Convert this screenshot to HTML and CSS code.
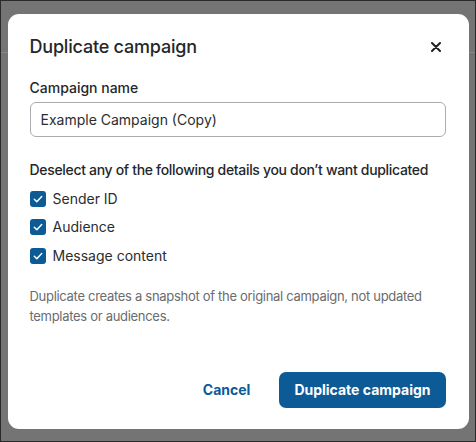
FILE: index.html
```html
<!DOCTYPE html>
<html lang="en">
<head>
<meta charset="utf-8">
<title>Duplicate campaign</title>
<link rel="stylesheet" href="styles.css">
</head>
<body>
<div class="page">
  <div class="page-header"></div>
  <div class="overlay">
    <div class="modal" role="dialog" aria-labelledby="dlg-title">
      <div class="modal-header">
        <h2 id="dlg-title" class="modal-title">Duplicate campaign</h2>
        <button class="close-btn" aria-label="Close">
          <svg width="10" height="10" viewBox="0 0 10 10"><path d="M1 1L9 9M9 1L1 9" stroke="#1f2326" stroke-width="2" stroke-linecap="round"/></svg>
        </button>
      </div>
      <div class="field">
        <label class="field-label" for="cname">Campaign name</label>
        <input id="cname" class="text-input" type="text" value="Example Campaign (Copy)">
      </div>
      <div class="options">
        <p class="options-title">Deselect any of the following details you don’t want duplicated</p>
        <label class="check-row">
          <span class="checkbox"><svg width="16" height="16" viewBox="0 0 16 16"><rect x="0" y="0" width="16" height="16" rx="3" fill="#0c5a96"/><path d="M4.3 8.3L6.8 10.7L11.7 5.6" fill="none" stroke="#fff" stroke-width="1.5" stroke-linecap="round" stroke-linejoin="round"/></svg></span>
          <span class="check-label">Sender ID</span>
        </label>
        <label class="check-row">
          <span class="checkbox"><svg width="16" height="16" viewBox="0 0 16 16"><rect x="0" y="0" width="16" height="16" rx="3" fill="#0c5a96"/><path d="M4.3 8.3L6.8 10.7L11.7 5.6" fill="none" stroke="#fff" stroke-width="1.5" stroke-linecap="round" stroke-linejoin="round"/></svg></span>
          <span class="check-label">Audience</span>
        </label>
        <label class="check-row">
          <span class="checkbox"><svg width="16" height="16" viewBox="0 0 16 16"><rect x="0" y="0" width="16" height="16" rx="3" fill="#0c5a96"/><path d="M4.3 8.3L6.8 10.7L11.7 5.6" fill="none" stroke="#fff" stroke-width="1.5" stroke-linecap="round" stroke-linejoin="round"/></svg></span>
          <span class="check-label">Message content</span>
        </label>
      </div>
      <p class="help">Duplicate creates a snapshot of the original campaign, not updated templates or audiences.</p>
      <div class="actions">
        <button class="btn btn-link">Cancel</button>
        <button class="btn btn-primary">Duplicate campaign</button>
      </div>
    </div>
  </div>
</div>
</body>
</html>
```

FILE: styles.css
```css
* { box-sizing: border-box; }
html, body { margin: 0; padding: 0; }
body {
  width: 476px;
  height: 442px;
  overflow: hidden;
  font-family: "Inter", "Liberation Sans", sans-serif;
  color: #24272a;
}
.page {
  position: relative;
  width: 476px;
  height: 442px;
  background: #747474;
  border: 1px solid #2a2a2a;
}
.page-header {
  height: 52px;
  border-bottom: 1px solid #878787;
}
.overlay {
  position: absolute;
  inset: 0;
  display: flex;
  align-items: center;
  justify-content: center;
}
.modal {
  width: 461px;
  height: 415px;
  background: #fff;
  border-radius: 11px;
  padding: 21px 23px 21px 22px;
  display: flex;
  flex-direction: column;
}
.modal-header {
  display: flex;
  align-items: center;
  justify-content: space-between;
  height: 24px;
}
.modal-title {
  margin: 0;
  font-size: 18px;
  line-height: 24px;
  font-weight: 500;
  letter-spacing: -0.2px;
}
.close-btn {
  border: 0;
  background: none;
  padding: 0;
  width: 10px;
  height: 10px;
  margin-right: 5px;
  display: flex;
}
.field {
  margin-top: 19px;
  display: flex;
  flex-direction: column;
}
.field-label {
  font-size: 14px;
  line-height: 20px;
  font-weight: 500;
}
.text-input {
  margin-top: 4px;
  height: 35px;
  border: 1px solid #a9adb1;
  border-radius: 6px;
  padding: 0 10px;
  font-family: inherit;
  font-size: 14px;
  color: #2a2d30;
}
.options {
  margin-top: 23px;
  display: flex;
  flex-direction: column;
}
.options-title {
  margin: 0 0 5px;
  font-size: 14px;
  line-height: 20px;
  font-weight: 500;
  letter-spacing: -0.32px;
  white-space: nowrap;
}
.check-row {
  display: flex;
  align-items: center;
  gap: 7px;
  height: 28.5px;
}
.checkbox { display: flex; }
.check-label {
  font-size: 14px;
  line-height: 20px;
  color: #2a2d30;
}
.help {
  margin: 16px 0 0;
  font-size: 13px;
  line-height: 20px;
  color: #696c70;
  letter-spacing: -0.3px;
}
.actions {
  margin-top: auto;
  display: flex;
  justify-content: flex-end;
  gap: 14px;
}
.btn {
  height: 36px;
  border: 0;
  border-radius: 7px;
  padding: 0 15px;
  font-family: inherit;
  font-size: 14px;
  font-weight: 700;
}
.btn-link {
  background: none;
  color: #0c5a96;
}
.btn-primary {
  background: #0c5a96;
  color: #fff;
}
```
